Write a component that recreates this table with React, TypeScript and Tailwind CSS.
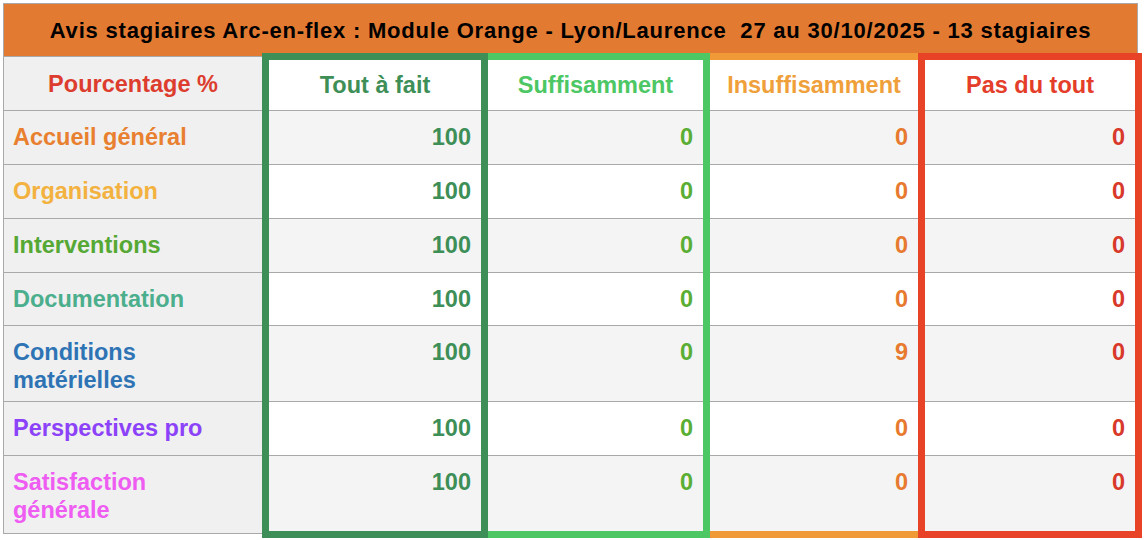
import React from "react";

// ── Data ────────────────────────────────────────────────────
type Row = { label: string[]; color: string; h: number; last?: boolean };

const ROWS: Row[] = [
  { label: ["Accueil général"], color: "text-[#E8802F]", h: 54 },
  { label: ["Organisation"], color: "text-[#F3B240]", h: 54 },
  { label: ["Interventions"], color: "text-[#56A834]", h: 54 },
  { label: ["Documentation"], color: "text-[#4BAE8C]", h: 53 },
  { label: ["Conditions", "matérielles"], color: "text-[#2E74B5]", h: 76 },
  { label: ["Perspectives pro"], color: "text-[#8C42F8]", h: 54 },
  { label: ["Satisfaction", "générale"], color: "text-[#EE5CF2]", h: 78, last: true },
];

type Col = {
  title: string;
  head: string;
  value: string;
  frame: string;
  values: number[];
};

const COLS: Col[] = [
  {
    title: "Tout à fait",
    head: "text-[#3D8F57]",
    value: "text-[#3D8F57]",
    frame: "w-[226px] border-[7px] border-[#3D8F57] relative z-10",
    values: [100, 100, 100, 100, 100, 100, 100],
  },
  {
    title: "Suffisamment",
    head: "text-[#4CC764]",
    value: "text-[#5BAE34]",
    frame: "w-[222px] border-[7px] border-l-0 border-[#4CC764]",
    values: [0, 0, 0, 0, 0, 0, 0],
  },
  {
    title: "Insuffisamment",
    head: "text-[#F0A03A]",
    value: "text-[#E77A2F]",
    frame: "w-[208px] border-y-[7px] border-[#F09A37]",
    values: [0, 0, 0, 0, 9, 0, 0],
  },
  {
    title: "Pas du tout",
    head: "text-[#E43D2A]",
    value: "text-[#D8392A]",
    frame: "w-[224px] border-[7px] border-[#E84326]",
    values: [0, 0, 0, 0, 0, 0, 0],
  },
];

const font = "font-['Liberation_Sans',Arial,Helvetica,sans-serif] font-bold";

export default function App() {
  return (
    <main className={`w-[1144px] h-[540px] bg-white pt-[3px] pl-[3px] overflow-hidden ${font}`}>
      {/* Title */}
      <div className="w-[1135px] h-[54px] bg-[#E37A31] border border-[#A9A9A9] flex items-center justify-center text-[22px] tracking-[0.8px] text-black whitespace-pre">
        Avis stagiaires Arc-en-flex : Module Orange - Lyon/Laurence  27 au 30/10/2025 - 13 stagiaires
      </div>

      <div className="flex items-start">
        {/* Label column */}
        <div className="w-[259px] border-l border-[#A9A9A9] bg-[#F0F0F0] text-[23.5px] leading-[28px]">
          <div className="h-[54px] border-b border-[#A9A9A9] flex items-center justify-center text-[#DD3D2E]">
            Pourcentage %
          </div>
          {ROWS.map((r) => (
            <div
              key={r.label.join(" ")}
              style={{ height: r.h }}
              className={`border-b border-[#A9A9A9] pl-[9px] pt-[12px] ${r.color}`}
            >
              {r.label.map((l) => (
                <div key={l}>{l}</div>
              ))}
            </div>
          ))}
        </div>

        {/* Framed value columns */}
        {COLS.map((c) => (
          <div key={c.title} className={`-mt-[4px] text-[23.5px] leading-[28px] ${c.frame}`}>
            <div className={`h-[51px] bg-white border-b border-[#A9A9A9] flex items-center justify-center ${c.head}`}>
              {c.title}
            </div>
            {ROWS.map((r, i) => (
              <div
                key={r.label.join(" ")}
                style={{ height: r.last ? r.h - 3 : r.h }}
                className={`pt-[12px] pr-[10px] text-right ${c.value} ${i % 2 === 0 ? "bg-[#F4F4F4]" : "bg-white"} ${r.last ? "" : "border-b border-[#A9A9A9]"}`}
              >
                {c.values[i]}
              </div>
            ))}
          </div>
        ))}
      </div>
    </main>
  );
}
